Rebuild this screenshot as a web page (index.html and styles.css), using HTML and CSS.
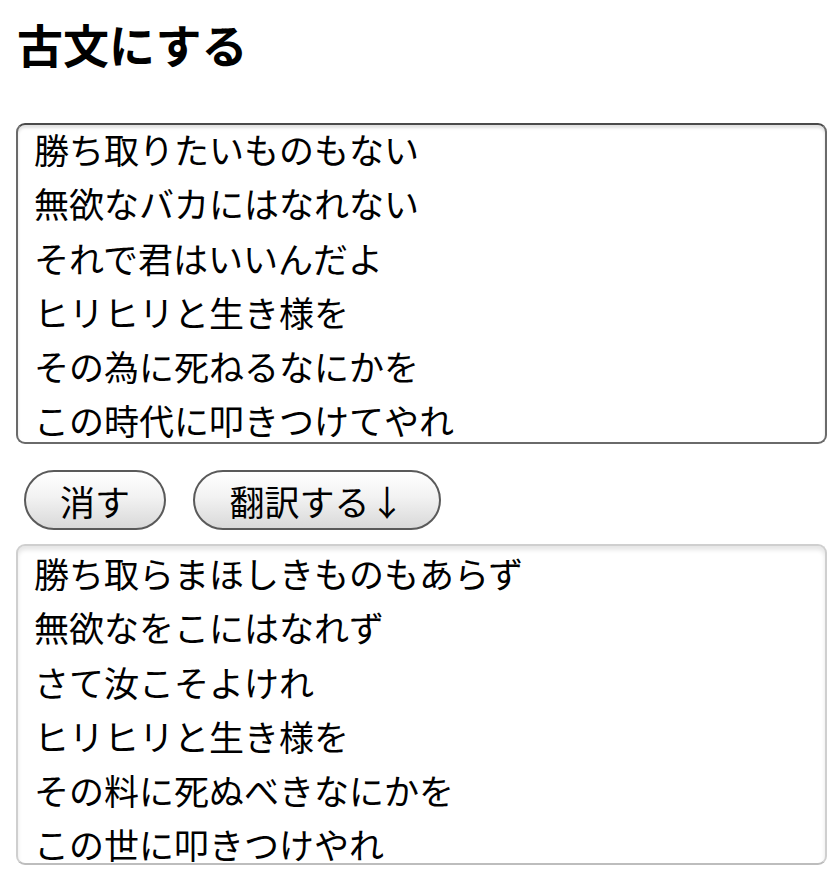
FILE: index.html
```html
<!DOCTYPE html>
<html lang="ja">
<head>
<meta charset="utf-8">
<title>古文にする</title>
<link rel="stylesheet" href="styles.css">
</head>
<body>
<main class="page">
  <h1 class="title">古文にする</h1>
  <div class="box box-input">
    <div class="lines lines-input">
      <div>勝ち取りたいものもない</div>
      <div>無欲なバカにはなれない</div>
      <div>それで君はいいんだよ</div>
      <div>ヒリヒリと生き様を</div>
      <div>その為に死ねるなにかを</div>
      <div>この時代に叩きつけてやれ</div>
    </div>
  </div>
  <div class="actions">
    <button class="btn btn-clear">消す</button>
    <button class="btn btn-go">翻訳する↓</button>
  </div>
  <div class="box box-output">
    <div class="lines">
      <div>勝ち取らまほしきものもあらず</div>
      <div>無欲なをこにはなれず</div>
      <div>さて汝こそよけれ</div>
      <div>ヒリヒリと生き様を</div>
      <div>その料に死ぬべきなにかを</div>
      <div>この世に叩きつけやれ</div>
    </div>
  </div>
</main>
</body>
</html>
```

FILE: styles.css
```css
html, body {
  margin: 0;
  padding: 0;
  background: #ffffff;
}
body {
  font-family: "Noto Sans CJK JP", "Noto Sans", sans-serif;
  color: #000;
  overflow: hidden;
}
.page {
  display: flex;
  flex-direction: column;
  align-items: flex-start;
  padding-left: 16px;
}
.title {
  font-size: 46px;
  font-weight: 700;
  line-height: 1;
  margin: 20px 0 0 1px;
  letter-spacing: 0;
}
.box {
  box-sizing: border-box;
  width: 811px;
  height: 321px;
  border-radius: 9px;
  overflow: hidden;
  background: #fff;
  font-size: 35px;
  line-height: 54.3px;
  padding-left: 16px;
}
.box-input {
  margin-top: 57px;
  border: 2px solid #6a6a6a;
  border-top-color: #4a4a4a;
  box-shadow: inset 0 3px 3px rgba(0,0,0,0.12);
}
.lines-input {
  margin-top: -3px;
}
.box-output {
  margin-top: 14px;
  border: 2px solid #cfcfcf;
  border-bottom-color: #bdbdbd;
  box-shadow: inset 0 4px 4px rgba(0,0,0,0.10);
}
.lines {
  white-space: nowrap;
}
.actions {
  display: flex;
  gap: 27px;
  margin-top: 26px;
  margin-left: 8px;
}
.btn {
  box-sizing: border-box;
  height: 60px;
  border-radius: 30px;
  border: 2px solid #5a5a5a;
  background: linear-gradient(#ffffff 0%, #f2f2f2 45%, #d9d9d9 100%);
  font-family: "Noto Sans CJK JP", "Noto Sans", sans-serif;
  font-size: 35px;
  line-height: 1;
  color: #000;
  padding: 0;
}
.btn-clear {
  width: 142px;
}
.btn-go {
  width: 248px;
}
```
